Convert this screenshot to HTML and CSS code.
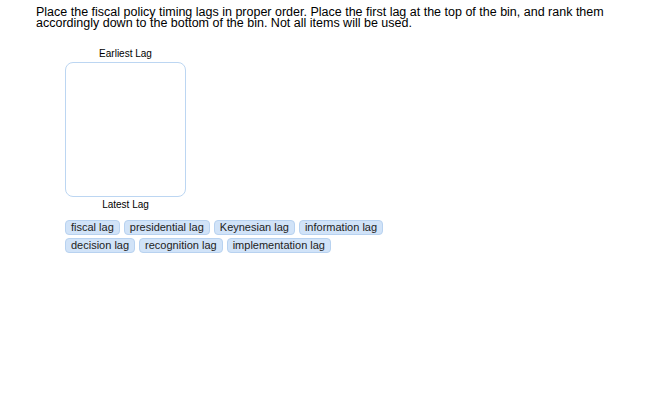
FILE: index.html
```html
<!DOCTYPE html>
<html lang="en">
<head>
    <meta charset="UTF-8">
    <meta name="viewport" content="width=device-width, initial-scale=1.0">
    <title>Ranking</title>
    <link rel="stylesheet" href="styles.css">
</head>
<body>
    <p class="prompt">Place the fiscal policy timing lags in proper order. Place the first lag at the top of the bin, and rank them accordingly down to the bottom of the bin. Not all items will be used.</p>
    <div class="ranking">
        <div class="bin-wrap">
            <div class="bin-label">Earliest Lag</div>
            <div class="bin"></div>
            <div class="bin-label">Latest Lag</div>
        </div>
        <div class="choices">
            <span class="chip">fiscal lag</span>
            <span class="chip">presidential lag</span>
            <span class="chip">Keynesian lag</span>
            <span class="chip">information lag</span>
            <span class="chip">decision lag</span>
            <span class="chip">recognition lag</span>
            <span class="chip">implementation lag</span>
        </div>
    </div>
</body>
</html>
```

FILE: styles.css
```css
body {
    margin: 0;
    padding: 7px 36px;
    font-family: "Liberation Sans", Arial, sans-serif;
    color: #000;
    background: #fff;
}
.prompt {
    margin: 0;
    font-size: 12.5px;
    line-height: 11px;
    width: 600px;
}
.ranking {
    margin-left: 29px;
    margin-top: 19px;
}
.bin-wrap {
    width: 121px;
}
.bin-label {
    font-size: 10px;
    line-height: 12px;
    text-align: center;
}
.bin {
    height: 133px;
    margin-top: 2px;
    margin-bottom: 2px;
    border: 1px solid #bcd6f2;
    border-radius: 8px;
}
.choices {
    display: flex;
    flex-wrap: wrap;
    gap: 3px 4px;
    width: 330px;
    margin-top: 9px;
}
.chip {
    font-size: 11px;
    line-height: 13px;
    padding: 0 5px;
    background-color: #d1e3f8;
    border: 1px solid #b8d2f0;
    border-radius: 4px;
    color: #222;
}
```
